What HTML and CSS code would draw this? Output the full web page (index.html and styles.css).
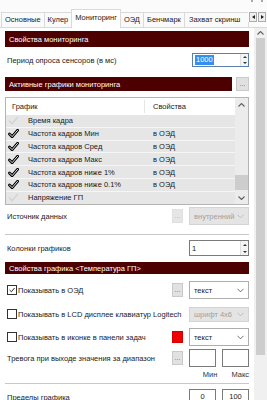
FILE: index.html
```html
<!DOCTYPE html>
<html lang="ru">
<head>
  <meta charset="UTF-8">
  <title>Мониторинг</title>
  <link rel="stylesheet" href="styles.css">
</head>
<body>
  <div class="window">
    <div class="topbar"><span class="mark"></span><span class="mark"></span></div>

    <div class="tabs">
      <div class="tab">Основные</div>
      <div class="tab">Кулер</div>
      <div class="tab active">Мониторинг</div>
      <div class="tab">ОЭД</div>
      <div class="tab">Бенчмарк</div>
      <div class="tab tab-cut"><span>Захват скринш</span></div>
      <div class="tab-arrows">
        <span class="arrow-btn"><i class="tri left"></i></span>
        <span class="arrow-btn"><i class="tri right"></i></span>
      </div>
    </div>

    <div class="panel">
      <div class="content">
        <div class="section s1">Свойства мониторинга</div>

        <div class="row r-period">
          <span class="label">Период опроса сенсоров (в мс)</span>
          <div class="spin spin-focus">
            <span class="spin-text"><span class="selected">1000</span></span>
            <span class="spin-btns"><i class="tri up"></i><i class="tri down"></i></span>
          </div>
        </div>

        <div class="section-row">
          <div class="section s2">Активные графики мониторинга</div>
          <span class="dots">...</span>
        </div>

        <div class="list">
          <div class="list-main">
            <div class="list-head">
              <span class="c1">График</span>
              <span class="c2">Свойства</span>
            </div>
            <div class="list-row off">
              <svg class="check" viewBox="0 0 12 10"><path d="M1.5 5.5 L4.5 8.5 L10.5 1.5"/></svg>
              <span class="c1">Время кадра</span><span class="c2"></span>
            </div>
            <div class="list-row">
              <svg class="check" viewBox="0 0 12 10"><path class="outer" d="M1.5 5.5 L4.5 8.5 L10.5 1.5"/><path class="inner" d="M1.5 5.5 L4.5 8.5 L10.5 1.5"/></svg>
              <span class="c1">Частота кадров Мин</span><span class="c2">в ОЭД</span>
            </div>
            <div class="list-row">
              <svg class="check" viewBox="0 0 12 10"><path class="outer" d="M1.5 5.5 L4.5 8.5 L10.5 1.5"/><path class="inner" d="M1.5 5.5 L4.5 8.5 L10.5 1.5"/></svg>
              <span class="c1">Частота кадров Сред</span><span class="c2">в ОЭД</span>
            </div>
            <div class="list-row">
              <svg class="check" viewBox="0 0 12 10"><path class="outer" d="M1.5 5.5 L4.5 8.5 L10.5 1.5"/><path class="inner" d="M1.5 5.5 L4.5 8.5 L10.5 1.5"/></svg>
              <span class="c1">Частота кадров Макс</span><span class="c2">в ОЭД</span>
            </div>
            <div class="list-row">
              <svg class="check" viewBox="0 0 12 10"><path class="outer" d="M1.5 5.5 L4.5 8.5 L10.5 1.5"/><path class="inner" d="M1.5 5.5 L4.5 8.5 L10.5 1.5"/></svg>
              <span class="c1">Частота кадров ниже 1%</span><span class="c2">в ОЭД</span>
            </div>
            <div class="list-row">
              <svg class="check" viewBox="0 0 12 10"><path class="outer" d="M1.5 5.5 L4.5 8.5 L10.5 1.5"/><path class="inner" d="M1.5 5.5 L4.5 8.5 L10.5 1.5"/></svg>
              <span class="c1">Частота кадров ниже 0.1%</span><span class="c2">в ОЭД</span>
            </div>
            <div class="list-row off">
              <svg class="check" viewBox="0 0 12 10"><path d="M1.5 5.5 L4.5 8.5 L10.5 1.5"/></svg>
              <span class="c1">Напряжение ГП</span><span class="c2"></span>
            </div>
            <div class="list-row off">
              <svg class="check" viewBox="0 0 12 10"><path d="M1.5 5.5 L4.5 8.5 L10.5 1.5"/></svg>
            </div>
          </div>
          <div class="list-scroll">
            <svg class="sb-chev" viewBox="0 0 7 4"><path d="M0.5 3.5 L3.5 0.5 L6.5 3.5"/></svg>
            <span class="sb-track"></span>
            <span class="sb-thumb"></span>
            <span class="sb-track short"></span>
            <svg class="sb-chev" viewBox="0 0 7 4"><path d="M0.5 0.5 L3.5 3.5 L6.5 0.5"/></svg>
          </div>
        </div>

        <div class="row r-source">
          <span class="label">Источник данных</span>
          <div class="controls">
            <span class="dots disabled">...</span>
            <div class="combo disabled"><span>внутренний</span><svg class="chev" viewBox="0 0 8 5"><path d="M0.5 0.5 L4 4 L7.5 0.5"/></svg></div>
          </div>
        </div>

        <div class="divider d1"></div>

        <div class="row r-cols">
          <span class="label">Колонки графиков</span>
          <div class="spin spin-wide">
            <span class="spin-text">1</span>
            <span class="spin-btns"><i class="tri up"></i><i class="tri down"></i></span>
          </div>
        </div>

        <div class="section s3">Свойства графика &lt;Температура ГП&gt;</div>

        <div class="row r-osd">
          <label class="check-label"><span class="box"><svg viewBox="0 0 10 10"><path d="M2 5 L4.2 7.2 L8.2 2.5"/></svg></span>Показывать в ОЭД</label>
          <div class="controls">
            <span class="dots">...</span>
            <div class="combo"><span>текст</span><svg class="chev" viewBox="0 0 8 5"><path d="M0.5 0.5 L4 4 L7.5 0.5"/></svg></div>
          </div>
        </div>

        <div class="row r-lcd">
          <label class="check-label"><span class="box"></span>Показывать в LCD дисплее клавиатур Logitech</label>
          <div class="combo disabled short"><span>шрифт 4x6</span><svg class="chev" viewBox="0 0 8 5"><path d="M0.5 0.5 L4 4 L7.5 0.5"/></svg></div>
        </div>

        <div class="row r-tray">
          <label class="check-label"><span class="box"></span>Показывать в иконке в панели задач</label>
          <div class="controls">
            <span class="swatch"></span>
            <div class="combo"><span>текст</span><svg class="chev" viewBox="0 0 8 5"><path d="M0.5 0.5 L4 4 L7.5 0.5"/></svg></div>
          </div>
        </div>

        <div class="row r-alarm">
          <span class="label">Тревога при выходе значения за диапазон</span>
          <div class="controls">
            <span class="dots">...</span>
            <span class="field"></span>
            <span class="field"></span>
          </div>
        </div>

        <div class="minmax">
          <span>Мин</span>
          <span>Макс</span>
        </div>

        <div class="divider d2"></div>

        <div class="row r-limits">
          <span class="label">Пределы графика</span>
          <div class="controls">
            <span class="field">0</span>
            <span class="field">100</span>
          </div>
        </div>
      </div>

      <div class="vscroll">
        <svg class="sb-chev" viewBox="0 0 7 4"><path d="M0.5 3.5 L3.5 0.5 L6.5 3.5"/></svg>
        <span class="main-thumb"></span>
      </div>
    </div>
  </div>
</body>
</html>
```

FILE: styles.css
```css
* {
  box-sizing: border-box;
}
body {
  margin: 0;
  font-family: "Liberation Sans", Arial, sans-serif;
  font-size: 7.5px;
  color: #1a1a1a;
  background: #fff;
}
.window {
  width: 267px;
  height: 400px;
  overflow: hidden;
  display: flex;
  flex-direction: column;
  background: #fff;
}

/* top strip */
.topbar {
  height: 9px;
  flex-shrink: 0;
  display: flex;
  justify-content: flex-end;
  gap: 8px;
  padding-right: 4px;
  background: #fbfbfb;
}
.mark {
  width: 2px;
  height: 2px;
  background: #a8a8a8;
}

/* tabs */
.tabs {
  display: flex;
  flex-shrink: 0;
  align-items: flex-end;
  height: 19px;
  padding-left: 1px;
  border-bottom: 1px solid #d9d9d9;
  background: #fbfbfb;
}
.tab {
  height: 15px;
  padding: 0 3px;
  line-height: 14px;
  white-space: nowrap;
  border: 1px solid #dadada;
  border-bottom: none;
  margin-right: -1px;
  background: #fafafa;
}
.tab.active {
  height: 19px;
  margin-bottom: -1px;
  padding: 0 3px;
  line-height: 15px;
  background: #fff;
  position: relative;
  z-index: 1;
}
.tab-cut {
  flex: 1;
  overflow: hidden;
  min-width: 0;
  padding-left: 4px;
}
.tab-arrows {
  display: flex;
  gap: 1px;
  align-self: flex-start;
  margin-top: 3px;
  padding: 0 1px;
  background: #fbfbfb;
}
.arrow-btn {
  width: 8px;
  height: 10px;
  border: 1px solid #adadad;
  background: #f0f0f0;
  display: flex;
  align-items: center;
  justify-content: center;
}
.tri {
  width: 0;
  height: 0;
  border: 2px solid transparent;
}
.tri.left {
  border-right: 3px solid #222;
  border-left: none;
}
.tri.right {
  border-left: 3px solid #222;
  border-right: none;
}
.tri.up {
  border-bottom: 2px solid #333;
  border-top: none;
}
.tri.down {
  border-top: 2px solid #333;
  border-bottom: none;
}

/* panel */
.panel {
  flex: 1;
  display: flex;
  min-height: 0;
  overflow: hidden;
}
.content {
  width: 254px;
  padding: 0 5px;
  display: flex;
  flex-direction: column;
}
.content > * {
  flex-shrink: 0;
}
.vscroll {
  width: 13px;
  background: #f0f0f0;
  display: flex;
  flex-direction: column;
  align-items: center;
}
.sb-chev {
  width: 7px;
  height: 4px;
  flex-shrink: 0;
  fill: none;
  stroke: #606060;
  stroke-width: 1.1;
}
.vscroll .sb-chev {
  margin: 3px 0 3px;
}
.main-thumb {
  width: 9px;
  height: 317px;
  flex-shrink: 0;
  background: #cdcdcd;
}

/* section bars */
.section {
  background: #4c0000;
  color: #fff;
  padding-left: 4px;
  display: flex;
  align-items: center;
}
.s1 {
  margin-top: 3px;
  height: 16px;
}
.section-row {
  margin-top: 10px;
  display: flex;
  gap: 4px;
  height: 14px;
}
.s2 {
  flex: 1;
}
.s3 {
  margin-top: 6px;
  height: 12px;
}

/* generic rows */
.row {
  display: flex;
  align-items: center;
  justify-content: space-between;
  white-space: nowrap;
}
.label {
  padding-left: 2px;
}
.controls {
  display: flex;
  align-items: center;
  gap: 6px;
}
.r-period {
  margin-top: 6px;
  height: 14px;
}
.r-source {
  margin-top: 2px;
  height: 18px;
}
.r-cols {
  margin-top: 5px;
  height: 16px;
}
.r-osd {
  margin-top: 7px;
  height: 18px;
}
.r-lcd {
  margin-top: 7px;
  height: 16px;
}
.r-tray {
  margin-top: 6px;
  height: 18px;
}
.r-alarm {
  margin-top: 3px;
  height: 18px;
}
.r-limits {
  margin-top: 5px;
  height: 16px;
}

.divider {
  height: 1px;
  background: #c8c8c8;
}
.d1 {
  margin-top: 9px;
}
.d2 {
  margin-top: 3px;
}

/* small buttons */
.dots {
  width: 13px;
  height: 14px;
  border: 1px solid #c9c9c9;
  background: #e1e1e1;
  color: #666;
  font-size: 7px;
  text-align: center;
  line-height: 12px;
}
.controls .dots {
  width: 11px;
}
.dots.disabled {
  background: #e6e6e6;
  border-color: #e0e0e0;
  color: #b0b0b0;
}

/* spin boxes */
.spin {
  display: flex;
  height: 14px;
  border: 1px solid #7a7a7a;
  background: #fff;
}
.spin-focus {
  width: 57px;
  border-color: #5a7fb0;
}
.spin-wide {
  width: 60px;
  height: 16px;
}
.spin-text {
  flex: 1;
  padding-left: 2px;
  display: flex;
  align-items: center;
}
.selected {
  background: #3390f0;
  color: #fff;
  padding: 0 1px;
  line-height: 10px;
}
.spin-btns {
  width: 8px;
  display: flex;
  flex-direction: column;
  align-items: center;
  justify-content: space-around;
  border-left: 1px solid #e0e0e0;
  background: #f4f4f4;
}

/* dropdowns */
.combo {
  width: 60px;
  height: 18px;
  border: 1px solid #adadad;
  background: #fff;
  display: flex;
  align-items: center;
  justify-content: space-between;
  padding: 0 4px;
}
.combo.disabled {
  background: #e4e4e4;
  border-color: #d4d4d4;
  color: #a0a0a0;
}
.combo.short {
  height: 15px;
}
.chev {
  width: 7px;
  height: 5px;
  fill: none;
  stroke: #606060;
  stroke-width: 1;
}
.combo.disabled .chev {
  stroke: #b8b8b8;
}

/* list */
.list {
  margin-top: 6px;
  height: 108px;
  border: 1px solid #b4b4b4;
  display: flex;
  overflow: hidden;
}
.list-main {
  flex: 1;
  display: flex;
  flex-direction: column;
  min-width: 0;
}
.list-head {
  height: 17px;
  flex-shrink: 0;
  display: flex;
  align-items: center;
  background: #fff;
}
.list-head .c1 {
  width: 139px;
  padding-left: 6px;
  border-right: 1px solid #e5e5e5;
  line-height: 13px;
}
.list-head .c2 {
  padding-left: 8px;
}
.list-row {
  height: 12.8px;
  flex-shrink: 0;
  display: flex;
  align-items: center;
  white-space: nowrap;
  background: #e6e6e6;
  border-bottom: 1px solid #f6f6f6;
}
.list-row .c1 {
  width: 125px;
}
.check {
  width: 11px;
  height: 9px;
  flex-shrink: 0;
  margin: 0 9px 0 2px;
  fill: none;
  stroke-linecap: round;
  stroke-linejoin: round;
}
.check .outer {
  stroke: #000;
  stroke-width: 3.2;
}
.check .inner {
  stroke: #fff;
  stroke-width: 1;
}
.list-row.off .check path {
  stroke: #d2d2d2;
  stroke-width: 1.6;
}
.list-scroll {
  width: 13px;
  display: flex;
  flex-direction: column;
  align-items: center;
  background: #ececec;
}
.list-scroll .sb-chev {
  margin: 5px 0 4px;
}
.sb-track {
  flex: 1;
}
.sb-track.short {
  flex: 0 0 1px;
}
.sb-thumb {
  width: 13px;
  height: 15px;
  flex-shrink: 0;
  background: #cdcdcd;
}

/* checkboxes */
.check-label {
  display: flex;
  align-items: center;
  padding-left: 2px;
}
.box {
  width: 10px;
  height: 10px;
  border: 1px solid #333;
  background: #fff;
  margin-right: 1px;
  display: flex;
}
.box svg {
  width: 8px;
  height: 8px;
  fill: none;
  stroke: #222;
  stroke-width: 1.2;
}
.swatch {
  width: 11px;
  height: 12px;
  background: #f00000;
  border: 1px solid #d00000;
}

/* number fields */
.field {
  width: 27px;
  height: 18px;
  border: 1px solid #7a7a7a;
  background: #fff;
  text-align: center;
  line-height: 16px;
}
.r-limits .field {
  height: 16px;
  line-height: 14px;
}
.minmax {
  margin-top: 3px;
  height: 10px;
  display: flex;
  justify-content: flex-end;
  gap: 14px;
  color: #333;
}
```
